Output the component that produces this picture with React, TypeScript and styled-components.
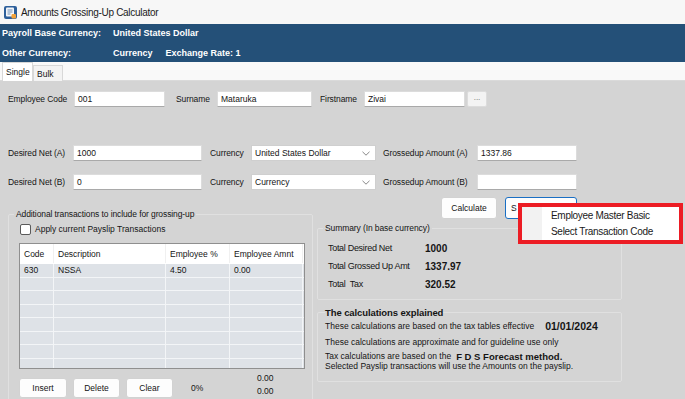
import React from 'react';
import styled, { createGlobalStyle } from 'styled-components';

const GlobalStyle = createGlobalStyle`
  html, body { margin: 0; padding: 0; }
  body {
    font-family: "Liberation Sans", Arial, sans-serif;
    font-size: 8.5px;
    color: #141414;
    background: #d4d4d4;
  }
  * { box-sizing: border-box; }
`;

const Window = styled.div`
  position: relative;
  width: 685px;
  height: 399px;
  overflow: hidden;
  display: flex;
  flex-direction: column;
  background: #d4d4d4;
`;

const TitleBar = styled.div`
  height: 24px;
  flex: none;
  display: flex;
  align-items: center;
  gap: 3px;
  padding-left: 3px;
  background: #f7f7f7;
  font-size: 10px;
  letter-spacing: -0.3px;
  color: #1b1b1b;
`;

const CurrencyBand = styled.div`
  height: 38px;
  flex: none;
  background: #245078;
  color: #fff;
  font-weight: bold;
  font-size: 9px;
  padding: 1px 0 0 2px;
  display: flex;
  flex-direction: column;
  gap: 4px;
`;

const BandRow = styled.div`
  display: flex;
  line-height: 16px;
`;

const BandKey = styled.span`
  width: 111px;
`;

const BandExtra = styled.span`
  margin-left: 13px;
`;

const TabStrip = styled.div`
  height: 19px;
  flex: none;
  display: flex;
  align-items: flex-end;
  padding-left: 2px;
  background: #f9f9f9;
  border-bottom: 1px solid #dadada;
`;

const Tab = styled.div<{ $active?: boolean; $w: number }>`
  width: ${p => p.$w}px;
  height: ${p => (p.$active ? 19 : 16)}px;
  margin-bottom: -1px;
  padding-left: 3px;
  display: flex;
  align-items: center;
  background: ${p => (p.$active ? '#fff' : '#f3f3f3')};
  border: 1px solid #d8d8d8;
  border-bottom: none;
  font-size: 8.5px;
`;

const Page = styled.div`
  flex: 1;
  overflow: hidden;
  padding: 10px 0 0 8px;
  display: flex;
  flex-direction: column;
`;

const Row = styled.div<{ $top?: number }>`
  display: flex;
  align-items: center;
  height: 16px;
  margin-top: ${p => p.$top ?? 0}px;
`;

const Label = styled.span<{ $w: number; $gap?: number }>`
  width: ${p => p.$w}px;
  margin-left: ${p => p.$gap ?? 0}px;
  white-space: nowrap;
  letter-spacing: -0.1px;
`;

const TextBox = styled.div<{ $w: number }>`
  width: ${p => p.$w}px;
  height: 16px;
  padding-left: 3px;
  display: flex;
  align-items: center;
  background: #fff;
  border: 1px solid #dcdcdc;
  border-bottom-color: #a9a9a9;
`;

const Combo = styled(TextBox)`
  justify-content: space-between;
  padding-right: 5px;
  border-color: #cfcfcf;
`;

const DotsButton = styled.div`
  width: 20px;
  height: 16px;
  margin-left: 2px;
  display: flex;
  justify-content: center;
  padding-top: 1px;
  background: #f3f3f3;
  border: 1px solid #dcdcdc;
  border-radius: 2px;
  color: #666;
  font-size: 8px;
`;

const BottomArea = styled.div`
  display: flex;
  align-items: flex-start;
  margin-top: 7px;
`;

const Group = styled.fieldset<{ $w: number; $h: number; $top: number; $pad: string }>`
  width: ${p => p.$w}px;
  height: ${p => p.$h}px;
  margin: ${p => p.$top}px 0 0 0;
  padding: ${p => p.$pad};
  min-inline-size: 0;
  border: 1px solid #e0e0e0;
  border-radius: 2px;
`;

const GroupTitle = styled.legend<{ $bold?: boolean }>`
  padding: 0 ${p => (p.$bold ? 0 : 2)}px;
  margin-left: ${p => (p.$bold ? 0 : -5)}px;
  line-height: ${p => (p.$bold ? 11 : 10)}px;
  font-size: ${p => (p.$bold ? 9.5 : 8.5)}px;
  font-weight: ${p => (p.$bold ? 'bold' : 'normal')};
  letter-spacing: -0.1px;
`;

const CheckRow = styled.label`
  display: flex;
  align-items: center;
  gap: 4px;
  height: 12px;
  margin: 4px 0 0 1px;
`;

const CheckBox = styled.span`
  width: 11px;
  height: 11px;
  background: #fff;
  border: 1px solid #5a5a5a;
  border-radius: 2px;
`;

const Grid = styled.div`
  width: 286px;
  height: 126px;
  margin-top: 8px;
  overflow: hidden;
  background: #dee2e7;
  border: 1px solid #8f8f8f;
`;

const GridRow = styled.div<{ $head?: boolean }>`
  display: grid;
  grid-template-columns: 34px 112px 64px 73px 1fr;
  height: ${p => (p.$head ? 20 : 13.5)}px;
  background: ${p => (p.$head ? '#fff' : 'transparent')};
  border-bottom: 1px solid ${p => (p.$head ? '#fff' : '#f3f5f7')};
`;

const Cell = styled.div<{ $head?: boolean }>`
  display: flex;
  align-items: center;
  padding-left: 4px;
  white-space: nowrap;
  border-right: 1px solid ${p => (p.$head ? '#f0f0f0' : '#f3f5f7')};
`;

const ButtonRow = styled.div<{ $top?: number; $left?: number }>`
  display: flex;
  align-items: center;
  gap: 6px;
  margin-top: ${p => p.$top ?? 0}px;
  padding-left: ${p => p.$left ?? 0}px;
`;

const Button = styled.div<{ $w: number; $h?: number; $focus?: boolean }>`
  width: ${p => p.$w}px;
  height: ${p => p.$h ?? 20}px;
  display: flex;
  align-items: center;
  justify-content: center;
  white-space: nowrap;
  overflow: hidden;
  background: #fdfdfd;
  border: 1px solid ${p => (p.$focus ? '#1a6fc4' : '#d2d2d2')};
  border-radius: 3px;
  font-size: 8.5px;
`;

/* the menu hides all of the Select button's caption but its first letter */
const PeekCaption = styled.span`
  width: 100%;
  padding-left: 5px;
  overflow: hidden;
  white-space: nowrap;
  clip-path: inset(0 calc(100% - 12px) 0 0);
`;

const Percent = styled.span`
  width: 60px;
  margin-left: 12px;
`;

const TotalsStack = styled.div`
  display: flex;
  flex-direction: column;
  align-self: flex-start;
  margin-top: -5px;
  line-height: 13px;
`;

const RightColumn = styled.div`
  width: 305px;
  margin-left: 4px;
  display: flex;
  flex-direction: column;
`;

const SummaryRow = styled.div`
  display: flex;
  align-items: center;
  height: 18px;
`;

const SummaryKey = styled.span`
  width: 97px;
  font-size: 9px;
  letter-spacing: -0.3px;
`;

const SummaryValue = styled.span`
  font-size: 10px;
  font-weight: bold;
`;

const Line = styled.div<{ $h: number; $gap?: number }>`
  display: flex;
  align-items: center;
  gap: ${p => p.$gap ?? 0}px;
  height: ${p => p.$h}px;
  white-space: nowrap;
`;

const Strong = styled.span<{ $size: number }>`
  font-weight: bold;
  font-size: ${p => p.$size}px;
`;

const PopupMenu = styled.div`
  position: absolute;
  left: 518px;
  top: 203px;
  width: 165px;
  height: 41px;
  display: flex;
  border: 4px solid #ec1c24;
  background: #fff;
`;

const MenuGutter = styled.div`
  width: 20px;
  background: #f2f2f2;
`;

const MenuItems = styled.div`
  display: flex;
  flex-direction: column;
  padding-left: 9px;
`;

const MenuItem = styled.div`
  height: 16.5px;
  display: flex;
  align-items: center;
  font-size: 10px;
  letter-spacing: -0.3px;
  color: #1a1a1a;
`;

function AppIcon() {
  return (
    <svg width="15" height="15" viewBox="0 0 15 15">
      <rect x="1" y="1" width="13" height="13" rx="2" fill="#2d5f9a" />
      <rect x="3" y="2.5" width="8" height="9" rx="1" fill="#f4f6f9" />
      <path d="M4.5 5h5M4.5 7h5M4.5 9h3" stroke="#6d8fb8" strokeWidth="1" />
      <rect x="8.5" y="9" width="4.5" height="4.5" rx="1" fill="#f2a23a" />
    </svg>
  );
}

function Chevron() {
  return (
    <svg width="8" height="5" viewBox="0 0 8 5">
      <path d="M0.5 0.8 L4 4.2 L7.5 0.8" fill="none" stroke="#7a7a7a" strokeWidth="0.9" />
    </svg>
  );
}

const emptyRows = Array.from({ length: 7 }, (_, i) => i);

export default function App() {
  return (
    <>
      <GlobalStyle />
      <Window>
        <TitleBar>
          <AppIcon />
          Amounts Grossing-Up Calculator
        </TitleBar>
        <CurrencyBand>
          <BandRow>
            <BandKey>Payroll Base Currency:</BandKey>
            <span>United States Dollar</span>
          </BandRow>
          <BandRow>
            <BandKey>Other Currency:</BandKey>
            <span>Currency</span>
            <BandExtra>Exchange Rate: 1</BandExtra>
          </BandRow>
        </CurrencyBand>
        <TabStrip>
          <Tab $active $w={31}>Single</Tab>
          <Tab $w={30}>Bulk</Tab>
        </TabStrip>
        <Page>
          <Row>
            <Label $w={66}>Employee Code</Label>
            <TextBox $w={91}>001</TextBox>
            <Label $w={41} $gap={11}>Surname</Label>
            <TextBox $w={95}>Mataruka</TextBox>
            <Label $w={44} $gap={8}>Firstname</Label>
            <TextBox $w={101}>Zivai</TextBox>
            <DotsButton>...</DotsButton>
          </Row>
          <Row $top={38}>
            <Label $w={65}>Desired Net (A)</Label>
            <TextBox $w={129}>1000</TextBox>
            <Label $w={41} $gap={8}>Currency</Label>
            <Combo $w={125}>United States Dollar<Chevron /></Combo>
            <Label $w={94} $gap={7}>Grossedup Amount (A)</Label>
            <TextBox $w={100}>1337.86</TextBox>
          </Row>
          <Row $top={13}>
            <Label $w={65}>Desired Net (B)</Label>
            <TextBox $w={129}>0</TextBox>
            <Label $w={41} $gap={8}>Currency</Label>
            <Combo $w={125}>Currency<Chevron /></Combo>
            <Label $w={94} $gap={7}>Grossedup Amount (B)</Label>
            <TextBox $w={100}></TextBox>
          </Row>
          <BottomArea>
            <Group $w={305} $h={220} $top={12} $pad="0 0 0 10px">
              <GroupTitle>Additional transactions to include for grossing-up</GroupTitle>
              <CheckRow>
                <CheckBox />
                Apply current Payslip Transactions
              </CheckRow>
              <Grid>
                <GridRow $head>
                  <Cell $head>Code</Cell>
                  <Cell $head>Description</Cell>
                  <Cell $head>Employee %</Cell>
                  <Cell $head>Employee Amnt</Cell>
                  <Cell $head />
                </GridRow>
                <GridRow>
                  <Cell>630</Cell>
                  <Cell>NSSA</Cell>
                  <Cell>4.50</Cell>
                  <Cell>0.00</Cell>
                  <Cell />
                </GridRow>
                {emptyRows.map(i => (
                  <GridRow key={i}>
                    <Cell />
                    <Cell />
                    <Cell />
                    <Cell />
                    <Cell />
                  </GridRow>
                ))}
              </Grid>
              <ButtonRow $top={8}>
                <Button $w={48}>Insert</Button>
                <Button $w={47}>Delete</Button>
                <Button $w={47}>Clear</Button>
                <Percent>0%</Percent>
                <TotalsStack>
                  <span>0.00</span>
                  <span>0.00</span>
                </TotalsStack>
              </ButtonRow>
            </Group>
            <RightColumn>
              <ButtonRow $left={124}>
                <Button $w={56} $h={22}>Calculate</Button>
                <Button $w={72} $h={22} $focus style={{ marginLeft: 2 }}>
                  <PeekCaption>S</PeekCaption>
                </Button>
              </ButtonRow>
              <Group $w={305} $h={77} $top={4} $pad="6px 0 0 10px">
                <GroupTitle>Summary (In base currency)</GroupTitle>
                <SummaryRow>
                  <SummaryKey>Total Desired Net</SummaryKey>
                  <SummaryValue>1000</SummaryValue>
                </SummaryRow>
                <SummaryRow>
                  <SummaryKey>Total Grossed Up Amt</SummaryKey>
                  <SummaryValue>1337.97</SummaryValue>
                </SummaryRow>
                <SummaryRow>
                  <SummaryKey>Total&nbsp; Tax</SummaryKey>
                  <SummaryValue>320.52</SummaryValue>
                </SummaryRow>
              </Group>
              <Group $w={305} $h={75} $top={7} $pad="1px 0 0 7px">
                <GroupTitle $bold>The calculations explained</GroupTitle>
                <Line $h={14} $gap={11}>
                  These calculations are based on the tax tables effective
                  <Strong $size={10.5}>01/01/2024</Strong>
                </Line>
                <Line $h={18}>These calculations are approximate and for guideline use only</Line>
                <Line $h={10} $gap={5}>
                  Tax calculations are based on the
                  <Strong $size={9.5}>F D S Forecast method.</Strong>
                </Line>
                <Line $h={9}>Selected Payslip transactions will use the Amounts on the payslip.</Line>
              </Group>
            </RightColumn>
          </BottomArea>
        </Page>
        <PopupMenu>
          <MenuGutter />
          <MenuItems>
            <MenuItem>Employee Master Basic</MenuItem>
            <MenuItem>Select Transaction Code</MenuItem>
          </MenuItems>
        </PopupMenu>
      </Window>
    </>
  );
}
